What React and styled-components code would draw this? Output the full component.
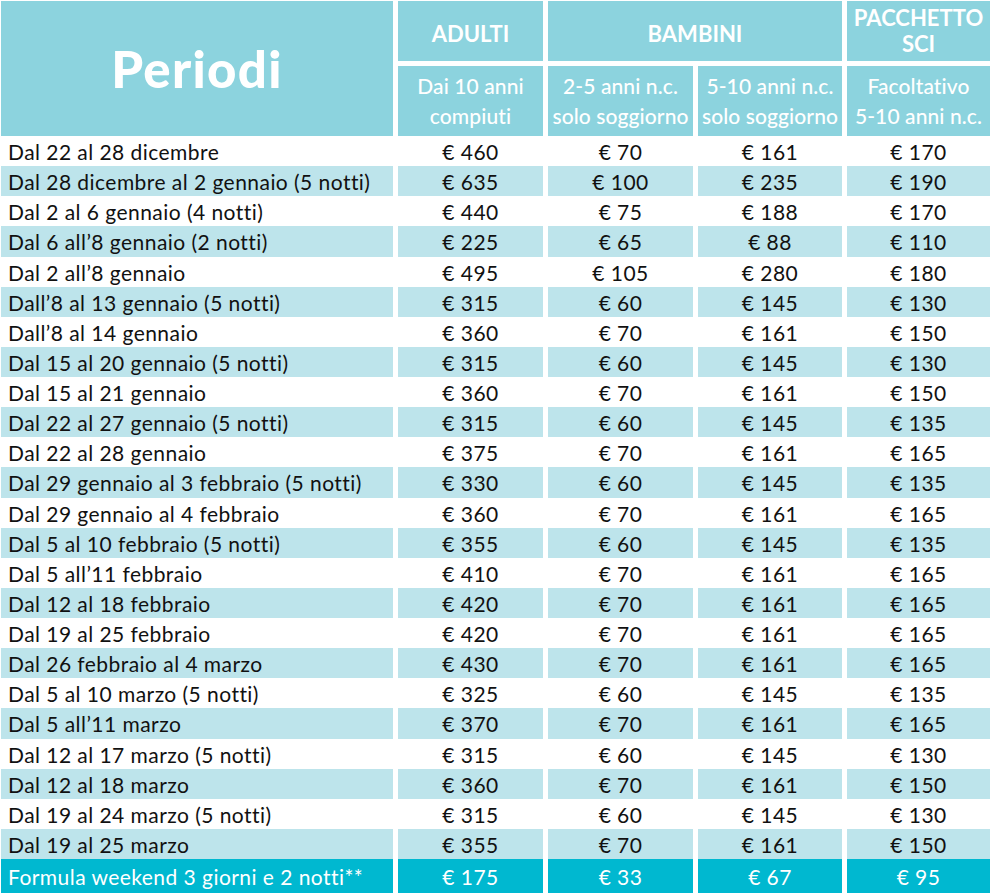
import React from "react";
import styled, { createGlobalStyle } from "styled-components";

const Global = createGlobalStyle`
  html, body { margin: 0; padding: 0; background: #ffffff; }
  body { font-family: Lato, "Open Sans", sans-serif; }
`;

const HEAD = "#8cd3de";
const LIGHT = "#bde4eb";
const STRONG = "#00b8d0";

const Grid = styled.div`
  display: grid;
  grid-template-columns: 392px 145px 145px 144px 143px;
  grid-template-rows: 60px 75px repeat(24, 30.125px) 34px;
  column-gap: 5px;
  padding: 1px 0 0 1px;
  width: 989px;
`;

const TitleCell = styled.div`
  grid-row: 1 / span 2;
  background: ${HEAD};
  color: #fff;
  display: flex;
  align-items: center;
  justify-content: center;
  font-size: 51px;
  font-weight: 900;
  letter-spacing: 1.3px;
`;

const GroupHead = styled.div`
  grid-column: ${(p) => p.$span || "auto"};
  background: ${HEAD};
  color: #fff;
  display: flex;
  align-items: center;
  justify-content: center;
  text-align: center;
  font-size: 22px;
  font-weight: 700;
  line-height: 26px;
  padding-top: ${(p) => (p.$shift ? "5px" : "0")};
  box-sizing: border-box;
`;

const SubHead = styled.div`
  margin-top: 5px;
  background: ${HEAD};
  color: #fff;
  display: flex;
  align-items: center;
  justify-content: center;
  text-align: center;
  font-size: 21px;
  font-weight: 500;
  letter-spacing: 0.1px;
  line-height: 30px;
  white-space: nowrap;
`;

const Cell = styled.div`
  background: ${(p) => (p.$tone === "strong" ? STRONG : p.$tone === "light" ? LIGHT : "#fff")};
  color: ${(p) => (p.$tone === "strong" ? "#fff" : "#111")};
  display: flex;
  align-items: center;
  justify-content: ${(p) => (p.$left ? "flex-start" : "center")};
  padding-left: ${(p) => (p.$left ? "7px" : "0")};
  padding-top: 1px;
  font-size: 21px;
  font-weight: 400;
  letter-spacing: 0.45px;
  white-space: nowrap;
  box-sizing: border-box;
`;

const rows = [
  ["Dal 22 al 28 dicembre", 460, 70, 161, 170],
  ["Dal 28 dicembre al 2 gennaio (5 notti)", 635, 100, 235, 190],
  ["Dal 2 al 6 gennaio (4 notti)", 440, 75, 188, 170],
  ["Dal 6 all’8 gennaio (2 notti)", 225, 65, 88, 110],
  ["Dal 2 all’8 gennaio", 495, 105, 280, 180],
  ["Dall’8 al 13 gennaio (5 notti)", 315, 60, 145, 130],
  ["Dall’8 al 14 gennaio", 360, 70, 161, 150],
  ["Dal 15 al 20 gennaio (5 notti)", 315, 60, 145, 130],
  ["Dal 15 al 21 gennaio", 360, 70, 161, 150],
  ["Dal 22 al 27 gennaio (5 notti)", 315, 60, 145, 135],
  ["Dal 22 al 28 gennaio", 375, 70, 161, 165],
  ["Dal 29 gennaio al 3 febbraio (5 notti)", 330, 60, 145, 135],
  ["Dal 29 gennaio al 4 febbraio", 360, 70, 161, 165],
  ["Dal 5 al 10 febbraio (5 notti)", 355, 60, 145, 135],
  ["Dal 5 all’11 febbraio", 410, 70, 161, 165],
  ["Dal 12 al 18 febbraio", 420, 70, 161, 165],
  ["Dal 19 al 25 febbraio", 420, 70, 161, 165],
  ["Dal 26 febbraio al 4 marzo", 430, 70, 161, 165],
  ["Dal 5 al 10 marzo (5 notti)", 325, 60, 145, 135],
  ["Dal 5 all’11 marzo", 370, 70, 161, 165],
  ["Dal 12 al 17 marzo (5 notti)", 315, 60, 145, 130],
  ["Dal 12 al 18 marzo", 360, 70, 161, 150],
  ["Dal 19 al 24 marzo (5 notti)", 315, 60, 145, 130],
  ["Dal 19 al 25 marzo", 355, 70, 161, 150],
];

const formula = ["Formula weekend 3 giorni e 2 notti**", 175, 33, 67, 95];

function Row({ data, tone }) {
  const [label, ...prices] = data;
  return (
    <>
      <Cell $left $tone={tone}>{label}</Cell>
      {prices.map((p, i) => (
        <Cell key={i} $tone={tone}>€ {p}</Cell>
      ))}
    </>
  );
}

export default function App() {
  return (
    <>
      <Global />
      <Grid>
        <TitleCell>Periodi</TitleCell>
        <GroupHead $shift>ADULTI</GroupHead>
        <GroupHead $span="span 2" $shift>BAMBINI</GroupHead>
        <GroupHead>
          PACCHETTO
          <br />
          SCI
        </GroupHead>
        <SubHead>
          Dai 10 anni
          <br />
          compiuti
        </SubHead>
        <SubHead>
          2-5 anni n.c.
          <br />
          solo soggiorno
        </SubHead>
        <SubHead>
          5-10 anni n.c.
          <br />
          solo soggiorno
        </SubHead>
        <SubHead>
          Facoltativo
          <br />
          5-10 anni n.c.
        </SubHead>
        {rows.map((r, i) => (
          <Row key={i} data={r} tone={i % 2 ? "light" : "white"} />
        ))}
        <Row data={formula} tone="strong" />
      </Grid>
    </>
  );
}
